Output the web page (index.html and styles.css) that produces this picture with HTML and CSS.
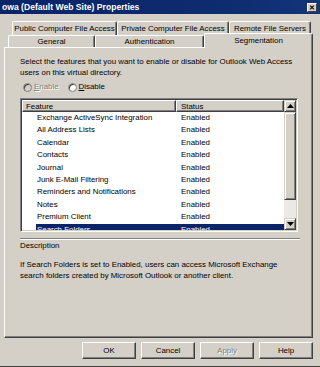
FILE: index.html
```html
<!DOCTYPE html>
<html>
<head>
<meta charset="utf-8">
<link rel="stylesheet" href="styles.css">
</head>
<body>
<div class="window">
  <div class="titlebar">
    <span class="title">owa (Default Web Site) Properties</span>
    <span class="close">&#x2715;</span>
  </div>
  <div class="tabs">
    <div class="tabrow row1">
      <div class="tab t-public">Public Computer File Access</div>
      <div class="tab t-private">Private Computer File Access</div>
      <div class="tab t-remote">Remote File Servers</div>
    </div>
    <div class="tabrow row2">
      <div class="tab t-general">General</div>
      <div class="tab t-auth">Authentication</div>
      <div class="tab t-seg selected">Segmentation</div>
    </div>
  </div>
  <div class="panel">
    <p class="intro">Select the features that you want to enable or disable for Outlook Web Access users on this virtual directory.</p>
    <div class="radios">
      <span class="radio disabled"><span class="dot"></span><span class="lbl"><u>E</u>nable</span></span>
      <span class="radio"><span class="dot"></span><span class="lbl"><u>D</u>isable</span></span>
    </div>
    <div class="listbox">
      <div class="listmain">
        <div class="lhead">
          <div class="hcell hfeat">Feature</div>
          <div class="hcell hstat">Status</div>
        </div>
        <div class="lrows">
          <div class="lrow"><span class="lsel"><span class="feat">Exchange ActiveSync Integration</span><span class="stat">Enabled</span></span></div>
          <div class="lrow"><span class="lsel"><span class="feat">All Address Lists</span><span class="stat">Enabled</span></span></div>
          <div class="lrow"><span class="lsel"><span class="feat">Calendar</span><span class="stat">Enabled</span></span></div>
          <div class="lrow"><span class="lsel"><span class="feat">Contacts</span><span class="stat">Enabled</span></span></div>
          <div class="lrow"><span class="lsel"><span class="feat">Journal</span><span class="stat">Enabled</span></span></div>
          <div class="lrow"><span class="lsel"><span class="feat">Junk E-Mail Filtering</span><span class="stat">Enabled</span></span></div>
          <div class="lrow"><span class="lsel"><span class="feat">Reminders and Notifications</span><span class="stat">Enabled</span></span></div>
          <div class="lrow"><span class="lsel"><span class="feat">Notes</span><span class="stat">Enabled</span></span></div>
          <div class="lrow"><span class="lsel"><span class="feat">Premium Client</span><span class="stat">Enabled</span></span></div>
          <div class="lrow active"><span class="lsel"><span class="feat">Search Folders</span><span class="stat">Enabled</span></span></div>
        </div>
      </div>
      <div class="vscroll">
        <div class="sbtn"><svg width="7" height="4" viewBox="0 0 7 4"><path d="M0 4 L3.5 0 L7 4 Z" fill="#000"/></svg></div>
        <div class="thumb"></div>
        <div class="track"></div>
        <div class="sbtn"><svg width="7" height="4" viewBox="0 0 7 4"><path d="M0 0 L3.5 4 L7 0 Z" fill="#000"/></svg></div>
      </div>
    </div>
    <div class="sep"></div>
    <div class="desclabel">Description</div>
    <p class="desc">If Search Folders is set to Enabled, users can access Microsoft Exchange search folders created by Microsoft Outlook or another client.</p>
  </div>
  <div class="buttons">
    <div class="btn">OK</div>
    <div class="btn">Cancel</div>
    <div class="btn disabled">Apply</div>
    <div class="btn">Help</div>
  </div>
</div>
</body>
</html>
```

FILE: styles.css
```css
* { box-sizing: border-box; }
html, body { margin: 0; padding: 0; background: #d4d0c8; }
body { font-family: "Liberation Sans", Arial, sans-serif; font-size: 7.9px; color: #000; }

.window {
  width: 320px;
  height: 367px;
  background: #d4d0c8;
  overflow: hidden;
  border-bottom: 1px solid #404040;
}

.titlebar {
  height: 14px;
  background: linear-gradient(to right, #0a246a, #0e2c70 70%, #14357a);
  color: #fff;
  display: flex;
  align-items: center;
  justify-content: space-between;
  padding: 0 3px 0 2px;
}
.title { font-weight: bold; font-size: 8.6px; line-height: 13px; }
.close {
  width: 10px;
  height: 9px;
  background: #d4d0c8;
  color: #000;
  font-size: 7px;
  font-weight: bold;
  line-height: 9px;
  text-align: center;
  border-top: 1px solid #fff;
  border-left: 1px solid #fff;
  border-right: 1px solid #404040;
  border-bottom: 1px solid #404040;
  display: flex;
  align-items: center;
  justify-content: center;
}

.tabs { margin-top: 7px; }
.tabrow { display: flex; align-items: flex-end; position: relative; }
.tab {
  text-align: center;
  white-space: nowrap;
  border-top: 1px solid #fff;
  border-left: 1px solid #fff;
  border-right: 1px solid #404040;
  box-shadow: inset -1px 0 0 #808080;
  border-radius: 2px 2px 0 0;
}
.row1 { padding-left: 12px; height: 14px; }
.row1 .tab { height: 14px; line-height: 14px; }
.t-public { width: 105px; }
.t-private { width: 112px; }
.t-remote { width: 82px; }

.row2 { padding-left: 8px; height: 12px; z-index: 2; }
.row2 .tab { height: 12px; line-height: 12px; }
.t-general { width: 87px; }
.t-auth { width: 109px; }
.row2 .tab.selected {
  width: 109px;
  height: 15px;
  line-height: 14px;
  margin-bottom: -1px;
  background: #d4d0c8;
  position: relative;
  z-index: 3;
}

.panel {
  margin-left: 4px;
  width: 309px;
  height: 291px;
  border-top: 1px solid #fff;
  border-left: 1px solid #fff;
  border-right: 1px solid #404040;
  border-bottom: 1px solid #404040;
  box-shadow: inset -1px -1px 0 #808080;
  padding: 8px 13px 0 15px;
}

.intro { margin: 0; line-height: 11px; width: 275px; }

.radios { margin-top: 3px; height: 12px; display: flex; align-items: center; }
.radio { display: flex; align-items: center; }
.radio .dot {
  width: 9px;
  height: 9px;
  border-radius: 50%;
  background: #fff;
  border: 1px solid #808080;
  box-shadow: inset 1px 1px 0 #404040;
  margin-right: 2px;
}
.radio:first-child { margin-left: 3px; margin-right: 9px; }
.radio.disabled .dot { background: #d4d0c8; }
.radio.disabled .lbl { color: #808080; text-shadow: 1px 1px 0 #fff; }
.radio .lbl { line-height: 12px; }

.listbox {
  margin-top: 5px;
  width: 278px;
  height: 134px;
  display: flex;
  background: #fff;
  border-top: 1px solid #808080;
  border-left: 1px solid #808080;
  border-right: 1px solid #fff;
  border-bottom: 1px solid #fff;
  box-shadow: inset 1px 1px 0 #404040, inset -1px -1px 0 #d4d0c8;
  padding: 1px;
  overflow: hidden;
}
.listmain { flex: 1; overflow: hidden; }
.lhead { display: flex; height: 12px; }
.hcell {
  background: #d4d0c8;
  line-height: 11px;
  border-top: 1px solid #fff;
  border-left: 1px solid #fff;
  border-right: 1px solid #404040;
  border-bottom: 1px solid #404040;
  box-shadow: inset -1px -1px 0 #808080;
  white-space: nowrap;
}
.hfeat { width: 154px; padding-left: 3px; }
.hstat { flex: 1; padding-left: 4px; }

.lrows { height: 118px; overflow: hidden; }
.lrow { height: 12.4px; line-height: 12.4px; display: flex; white-space: nowrap; padding-left: 14px; }
.lsel { display: flex; flex: 1; }
.feat { width: 140px; padding-left: 1px; }
.stat { padding-left: 5px; }
.lrow.active .lsel { background: #0a246a; color: #fff; }

.vscroll { width: 12px; display: flex; flex-direction: column; }
.sbtn {
  height: 12px;
  background: #d4d0c8;
  border-top: 1px solid #d4d0c8;
  border-left: 1px solid #d4d0c8;
  border-right: 1px solid #404040;
  border-bottom: 1px solid #404040;
  box-shadow: inset 1px 1px 0 #fff, inset -1px -1px 0 #808080;
  display: flex;
  align-items: center;
  justify-content: center;
}
.thumb {
  height: 88px;
  background: #d4d0c8;
  border-top: 1px solid #d4d0c8;
  border-left: 1px solid #d4d0c8;
  border-right: 1px solid #404040;
  border-bottom: 1px solid #404040;
  box-shadow: inset 1px 1px 0 #fff, inset -1px -1px 0 #808080;
}
.track { flex: 1; background: #ebe9e5; }

.sep {
  margin-top: 6px;
  width: 280px;
  height: 2px;
  border-top: 1px solid #808080;
  border-bottom: 1px solid #fff;
}
.desclabel { line-height: 11px; }
.desc { margin: 8px 0 0; line-height: 11px; width: 280px; }

.buttons {
  display: flex;
  justify-content: flex-end;
  gap: 5px;
  padding-right: 7px;
  margin-top: 4px;
}
.btn {
  width: 54px;
  height: 17px;
  line-height: 15px;
  text-align: center;
  background: #d4d0c8;
  border-top: 1px solid #fff;
  border-left: 1px solid #fff;
  border-right: 1px solid #404040;
  border-bottom: 1px solid #404040;
  box-shadow: inset -1px -1px 0 #808080;
}
.btn.disabled { color: #808080; text-shadow: 1px 1px 0 #fff; }
```
